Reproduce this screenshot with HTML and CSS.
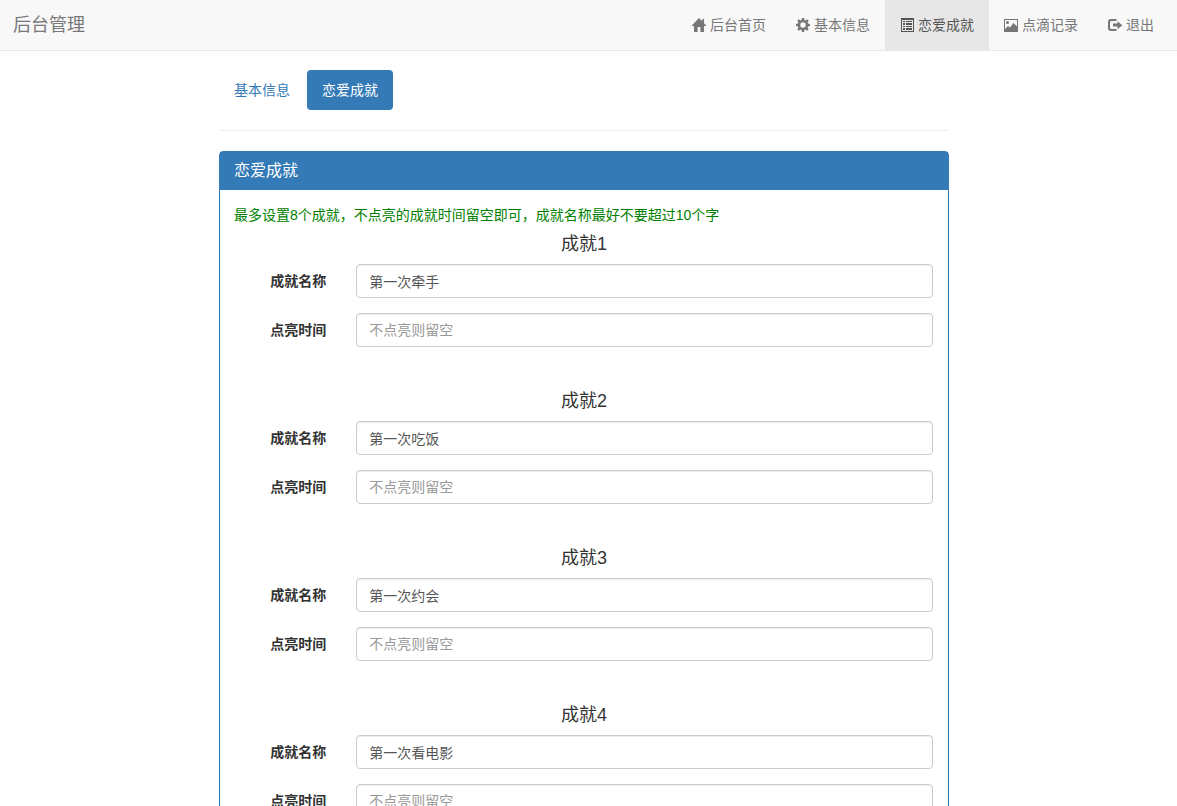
FILE: index.html
```html
<!DOCTYPE html>
<html lang="zh-CN">
<head>
<meta charset="utf-8">
<meta name="viewport" content="width=device-width, initial-scale=1">
<title>恋爱成就 - 后台管理</title>
<link rel="stylesheet" href="styles.css">
</head>
<body>
<header class="navbar">
  <a class="brand" href="#">后台管理</a>
  <nav class="nav" aria-label="主导航">
    <a class="nav-link" href="#"><svg class="icon" viewBox="0 0 14 14" aria-hidden="true"><path d="M7 0 0 7.2V8h2v6h3.6V9h2.8v5H12V8h2v-.8l-2-2V1h-1.8v2.3z"/></svg>后台首页</a>
    <a class="nav-link" href="#"><svg class="icon" viewBox="0 0 14 14" aria-hidden="true"><path fill-rule="evenodd" d="M5.9 0h2.2l.4 1.9 1.1.5L11.2 1.300l1.500 1.500-1.100 1.600.5 1.100 1.900.4v2.200l-1.900.4-.5 1.100 1.100 1.600-1.500 1.500-1.600-1.100-1.100.5-.4 1.900H5.900l-.4-1.900-1.100-.5-1.600 1.100-1.500-1.500 1.100-1.600-.5-1.100L0 8.100V5.900l1.900-.4.5-1.100L1.300 2.800l1.500-1.500 1.600 1.100 1.100-.5zM7 4.300a2.700 2.700 0 1 0 0 5.400 2.700 2.700 0 0 0 0-5.400z"/></svg>基本信息</a>
    <a class="nav-link active" href="#" aria-current="page"><svg class="icon" viewBox="0 0 14 14" aria-hidden="true"><path fill-rule="evenodd" d="M1 0h13v14H1zM2 2v11h11V2zM3 3h2v1H3zm3 0h6v1H6zM3 5h2v2H3zm3 0h6v2H6zM3 8h2v1H3zm3 0h6v1H6zm-3 2h2v2H3zm3 0h6v2H6z"/></svg>恋爱成就</a>
    <a class="nav-link" href="#"><svg class="icon" viewBox="0 0 14 14" aria-hidden="true"><path fill-rule="evenodd" d="M0 1h14v13H0zm1 1v9l3-3 2 1.500 3.500-4.500L13 8.500V2z"/><circle cx="3.500" cy="4.500" r="1.500"/></svg>点滴记录</a>
    <a class="nav-link" href="#"><svg class="icon" viewBox="0 0 14 14" aria-hidden="true"><path d="M8.500 1H3Q0 1 0 4v6q0 3 3 3h5.500v-2H3.500Q2 11 2 9.500v-5Q2 3 3.500 3h5zM9.500 3.200 14.300 7.200l-4.800 4V8.500H5v-3h4.500z"/></svg>退出</a>
  </nav>
</header>
<main class="content">
  <nav class="pills" aria-label="设置">
    <a class="pill" href="#">基本信息</a>
    <a class="pill active" href="#" aria-current="page">恋爱成就</a>
  </nav>
  <section class="panel">
    <h1 class="panel-title">恋爱成就</h1>
    <form class="panel-body">
      <p class="hint">最多设置8个成就，不点亮的成就时间留空即可，成就名称最好不要超过10个字</p>
      <section class="achievement">
        <h2 class="group-title">成就1</h2>
        <div class="field"><label class="label" for="name1">成就名称</label><input class="input" id="name1" type="text" value="第一次牵手"></div>
        <div class="field"><label class="label" for="time1">点亮时间</label><input class="input" id="time1" type="text" placeholder="不点亮则留空"></div>
      </section>
      <section class="achievement">
        <h2 class="group-title">成就2</h2>
        <div class="field"><label class="label" for="name2">成就名称</label><input class="input" id="name2" type="text" value="第一次吃饭"></div>
        <div class="field"><label class="label" for="time2">点亮时间</label><input class="input" id="time2" type="text" placeholder="不点亮则留空"></div>
      </section>
      <section class="achievement">
        <h2 class="group-title">成就3</h2>
        <div class="field"><label class="label" for="name3">成就名称</label><input class="input" id="name3" type="text" value="第一次约会"></div>
        <div class="field"><label class="label" for="time3">点亮时间</label><input class="input" id="time3" type="text" placeholder="不点亮则留空"></div>
      </section>
      <section class="achievement">
        <h2 class="group-title">成就4</h2>
        <div class="field"><label class="label" for="name4">成就名称</label><input class="input" id="name4" type="text" value="第一次看电影"></div>
        <div class="field"><label class="label" for="time4">点亮时间</label><input class="input" id="time4" type="text" placeholder="不点亮则留空"></div>
      </section>
    </form>
  </section>
</main>
</body>
</html>
```
FILE: styles.css
```css
* {
  box-sizing: border-box;
}

html {
  scrollbar-width: none;
}

body {
  margin: 0;
  background: #fff;
  color: #333;
  font: 14px/20px "Liberation Sans", "Noto Sans CJK SC", sans-serif;
}

a {
  color: #337ab7;
  text-decoration: none;
}

.navbar {
  display: flex;
  flex-wrap: wrap;
  justify-content: space-between;
  padding: 0 8px 0 13px;
  background: #f8f8f8;
  border-bottom: 1px solid #e7e7e7;
}

.brand {
  padding: 15px 0;
  color: #777;
  font-size: 18px;
}

.nav {
  display: flex;
}

.nav-link {
  display: flex;
  align-items: center;
  gap: 4px;
  padding: 15px;
  color: #777;
}

.nav-link.active {
  background: #e7e7e7;
  color: #555;
}

.icon {
  width: 14px;
  height: 14px;
  overflow: visible;
  fill: currentColor;
}

.content {
  max-width: 739px;
  margin: 0 auto;
  padding: 19px 9px 0 0;
}

.pills {
  display: flex;
  gap: 2px;
  padding-bottom: 20px;
  border-bottom: 1px solid #eee;
}

.pill {
  padding: 10px 15px;
  border-radius: 4px;
}

.pill.active {
  background: #337ab7;
  color: #fff;
}

.panel {
  margin: 20px 0;
  border: 1px solid #337ab7;
  border-radius: 4px;
}

.panel-title {
  margin: 0;
  padding: 9px 14px;
  background: #337ab7;
  color: #fff;
  font-size: 16px;
  font-weight: 400;
  line-height: 20px;
}

.panel-body {
  padding: 15px 0;
}

.hint {
  margin: 0;
  padding: 0 14px;
  color: #008000;
}

.achievement {
  padding-bottom: 20px;
}

.group-title {
  margin: 0;
  padding: 9px 0 10px;
  font-size: 18px;
  font-weight: 400;
  line-height: 20px;
  text-align: center;
}

.field {
  display: grid;
  grid-template-columns: 1fr 5fr;
  margin-bottom: 15px;
}

.label {
  padding: 7px 15px 7px 0;
  font-weight: 700;
  text-align: right;
}

.input {
  height: 34px;
  min-width: 0;
  margin: 0 15px;
  padding: 6px 12px;
  border: 1px solid #ccc;
  border-radius: 4px;
  background: #fff;
  box-shadow: inset 0 1px 1px rgba(0, 0, 0, .075);
  color: #555;
  font: inherit;
}

.input::placeholder {
  color: #999;
  opacity: 1;
}
```
